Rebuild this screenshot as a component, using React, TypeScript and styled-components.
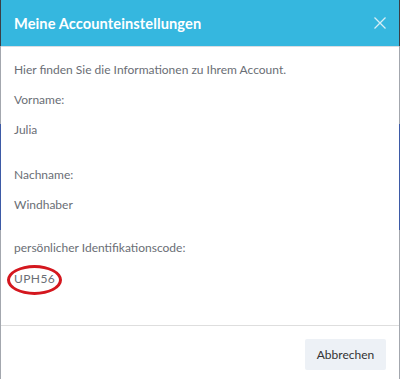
import React from 'react';
import styled, { createGlobalStyle } from 'styled-components';

const GlobalStyle = createGlobalStyle`
  html, body {
    margin: 0;
    padding: 0;
    height: 379px;
    overflow: hidden;
    background: linear-gradient(
      to bottom,
      #3a3f47 0px,
      #3a3f47 46px,
      #a3a7ae 46px,
      #a3a7ae 124px,
      #3d5aa6 124px,
      #3d5aa6 230px,
      #a3a7ae 230px
    );
    font-family: Lato, 'Open Sans', sans-serif;
  }
`;

const Modal = styled.div`
  margin: 0 1px;
  height: 379px;
  background: #fff;
  display: flex;
  flex-direction: column;
`;

const Header = styled.div`
  height: 46px;
  background: #35b7df;
  border-bottom: 1px solid #d8dde3;
  display: flex;
  align-items: center;
  justify-content: space-between;
  padding: 0 12px 0 13px;
  flex-shrink: 0;
`;

const Title = styled.h1`
  margin: 0;
  color: #fff;
  font-size: 14.6px;
  font-weight: 700;
  letter-spacing: 0.1px;
`;

const CloseButton = styled.button`
  border: 0;
  background: transparent;
  padding: 0;
  width: 14px;
  height: 14px;
  display: flex;
  cursor: pointer;
`;

const Body = styled.div`
  flex: 1;
  padding: 8px 13px 0;
  color: #6a6e75;
  font-size: 12px;
`;

const Line = styled.div`
  line-height: 30px;
`;

const Field = styled.div<{ $gap: number }>`
  margin-top: ${p => p.$gap}px;
`;

const Code = styled.span`
  position: relative;
  display: inline-block;
  letter-spacing: 0.4px;
  line-height: 32px;
`;

const Circle = styled.span`
  position: absolute;
  left: -7px;
  top: 2px;
  width: 49px;
  height: 24px;
  border: 3px solid #d4171e;
  border-radius: 50%;
`;

const Footer = styled.div`
  border-top: 1px solid #dedede;
  display: flex;
  justify-content: flex-end;
  padding: 13px 13px 9px;
  flex-shrink: 0;
`;

const Button = styled.button`
  height: 31px;
  width: 81px;
  border: 0;
  border-radius: 2px;
  background: #edf1f6;
  color: #333;
  font-family: Lato, 'Open Sans', sans-serif;
  font-size: 12px;
`;

export default function App() {
  return (
    <>
      <GlobalStyle />
      <Modal>
        <Header>
          <Title>Meine Accounteinstellungen</Title>
          <CloseButton aria-label="Schließen">
            <svg width="14" height="14" viewBox="0 0 14 14">
              <path d="M1.5 1.5L12.5 12.5M12.5 1.5L1.5 12.5" stroke="#d6eef6" strokeWidth="1.3" />
            </svg>
          </CloseButton>
        </Header>
        <Body>
          <Line>Hier finden Sie die Informationen zu Ihrem Account.</Line>
          <Line>Vorname:</Line>
          <Line>Julia</Line>
          <Field $gap={15}>
            <Line>Nachname:</Line>
            <Line>Windhaber</Line>
          </Field>
          <Field $gap={13}>
            <Line>persönlicher Identifikationscode:</Line>
            <Line>
              <Code>
                UPH56
                <Circle />
              </Code>
            </Line>
          </Field>
        </Body>
        <Footer>
          <Button>Abbrechen</Button>
        </Footer>
      </Modal>
    </>
  );
}
